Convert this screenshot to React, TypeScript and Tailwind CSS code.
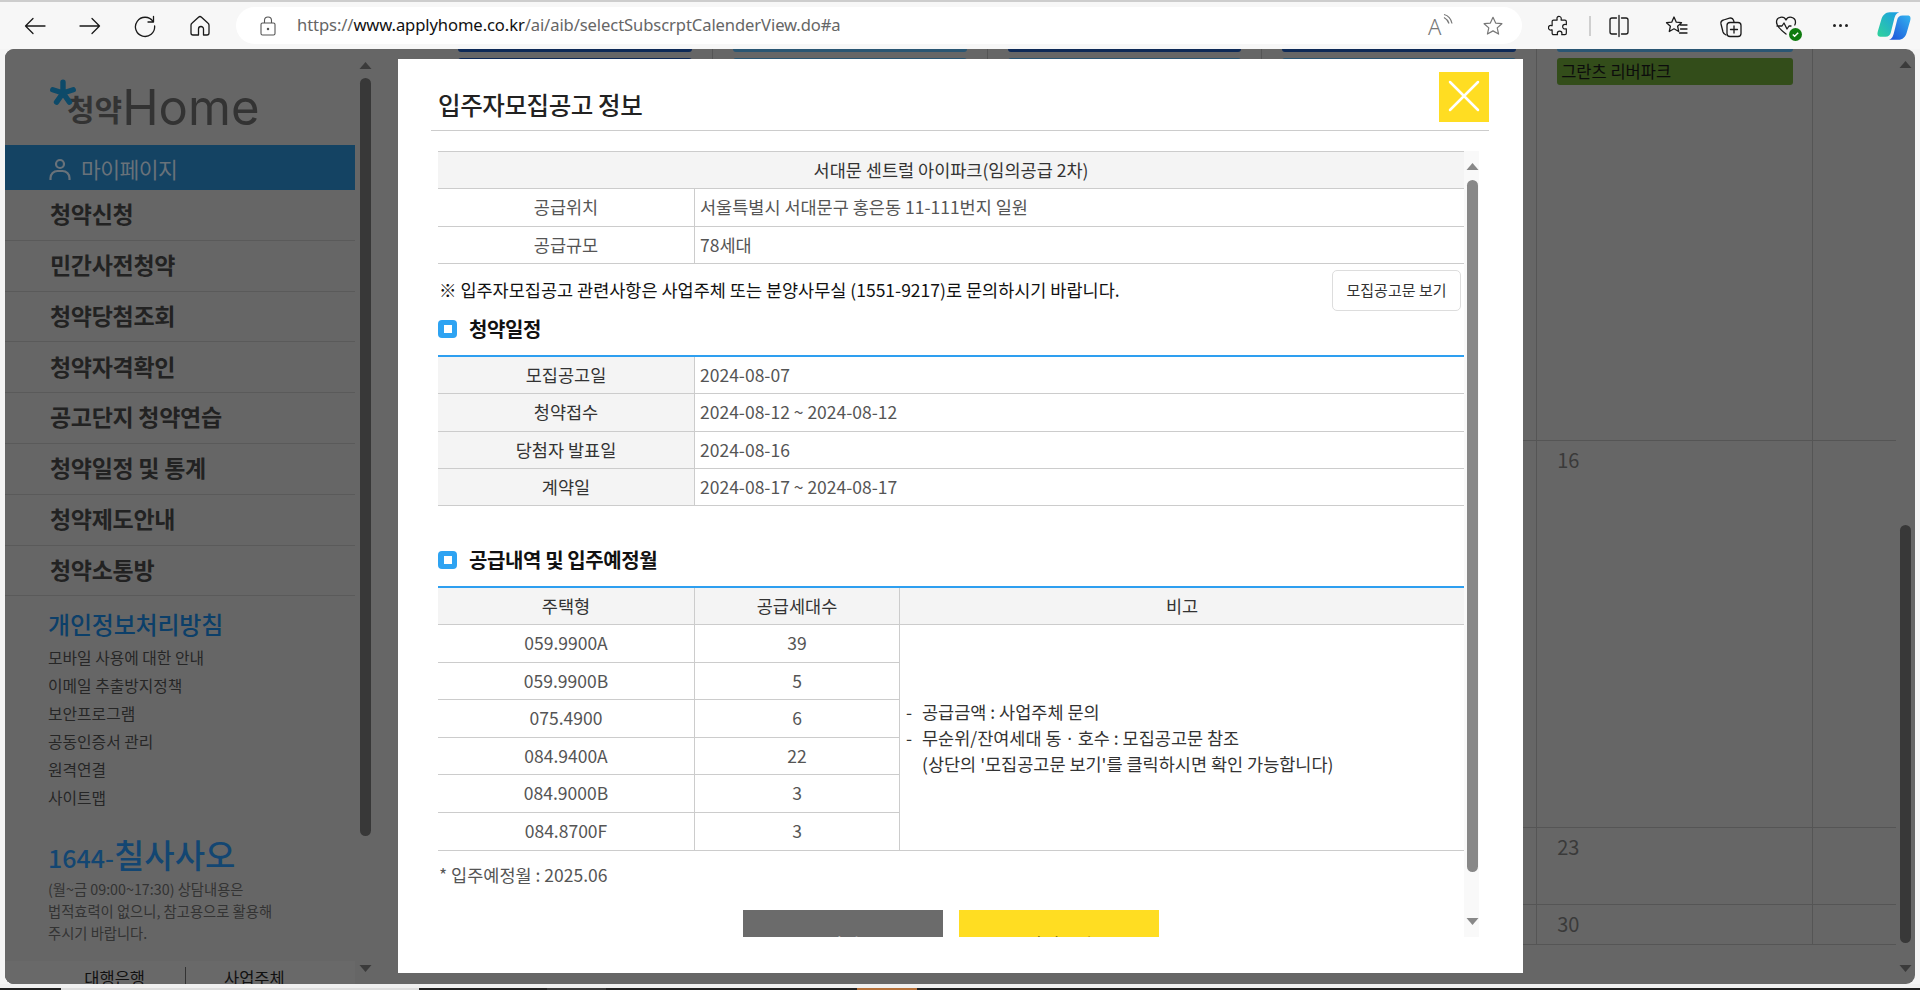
import React from 'react';

const sideMenu = ['청약신청', '민간사전청약', '청약당첨조회', '청약자격확인', '공고단지 청약연습', '청약일정 및 통계', '청약제도안내', '청약소통방'];
const sideLinks = ['모바일 사용에 대한 안내', '이메일 추출방지정책', '보안프로그램', '공동인증서 관리', '원격연결', '사이트맵'];
const schedule = [
  ['모집공고일', '2024-08-07'],
  ['청약접수', '2024-08-12 ~ 2024-08-12'],
  ['당첨자 발표일', '2024-08-16'],
  ['계약일', '2024-08-17 ~ 2024-08-17'],
];
const supply = [
  ['059.9900A', '39'],
  ['059.9900B', '5'],
  ['075.4900', '6'],
  ['084.9400A', '22'],
  ['084.9000B', '3'],
  ['084.8700F', '3'],
];

const Icon = ({ children, className }: { children: React.ReactNode; className: string }) => (
  <svg viewBox="0 0 24 24" fill="none" stroke="currentColor" strokeWidth="1.3" strokeLinecap="round" strokeLinejoin="round" className={className}>
    {children}
  </svg>
);

const ToolBtn = ({ children }: { children: React.ReactNode }) => (
  <div className="flex h-[37px] w-[55px] shrink-0 items-center justify-center text-[#1a1a1a]">{children}</div>
);

const Toolbar = () => (
  <div className="flex h-[47px] shrink-0 items-center bg-[#f7f7f7] pl-[7px]">
    <ToolBtn>
      <Icon className="h-6 w-6"><path d="M22 12H2.5M10 4.5 2.5 12l7.5 7.5" /></Icon>
    </ToolBtn>
    <ToolBtn>
      <Icon className="h-6 w-6"><path d="M2 12h19.5M14 4.5l7.5 7.5-7.5 7.5" /></Icon>
    </ToolBtn>
    <ToolBtn>
      <Icon className="h-6 w-6"><path d="M20 7.5A9.6 9.6 0 1 0 21.6 12M20.5 2.5v5.5H15" /></Icon>
    </ToolBtn>
    <ToolBtn>
      <Icon className="h-6 w-6"><path d="M10.5 3.2a2.2 2.2 0 0 1 3 0l6.6 6.1c.6.5.9 1.2.9 2V19a2 2 0 0 1-2 2h-3.5v-6a2.5 2.5 0 0 0-5 0v6H5a2 2 0 0 1-2-2v-7.7c0-.8.3-1.5.9-2z" /></Icon>
    </ToolBtn>
    <div className="ml-[9px] flex h-[37px] w-[1286px] shrink-0 items-center rounded-full bg-white pl-[24px] pr-[14px]">
      <svg viewBox="0 0 16 20" fill="none" stroke="#555" strokeWidth="1.1" className="h-[20px] w-[16px] shrink-0">
        <rect x="1" y="7" width="14" height="12" rx="1.5" />
        <path d="M4.5 7V4.5a3.5 3.5 0 0 1 7 0V7" />
        <circle cx="8" cy="13" r="0.7" fill="#555" />
      </svg>
      <div className="ml-[21px] flex-1 font-['Noto_Sans',sans-serif] text-[16.6px] tracking-[-0.1px] text-[#666]">
        https://<span className="text-[#111]">www.applyhome.co.kr</span>/ai/aib/selectSubscrptCalenderView.do#a
      </div>
      <div className="relative mr-[30px] h-[24px] w-[24px] text-[#777]">
        <span className="font-['Noto_Sans',sans-serif] text-[22px] font-light leading-[24px]">A</span>
        <svg viewBox="0 0 10 12" fill="none" stroke="#777" strokeWidth="1.2" className="absolute -right-[1px] top-[-1px] h-[13px] w-[10px]">
          <path d="M1 1c4 1 7 4 8 9M1 4c2 1 4 3 5 6" />
        </svg>
      </div>
      <Icon className="mr-[4px] h-[22px] w-[22px] text-[#777]"><path d="m12 2.5 2.9 6.3 6.8.7-5.1 4.6 1.5 6.7-6.1-3.5-6.1 3.5 1.5-6.7-5.1-4.6 6.8-.7z" /></Icon>
    </div>
    <div className="ml-[9px] flex h-[37px] w-[55px] shrink-0 items-center justify-center text-[#1a1a1a]">
      <Icon className="h-[22px] w-[22px]"><path d="M10 2.5a2.5 2.5 0 0 1 4.5 1.5c0 .5-.2 1-.2 1.5h4.2c.8 0 1.5.7 1.5 1.5v3.5c-.5 0-1-.2-1.5-.2a2.5 2.5 0 0 0 0 5c.5 0 1-.2 1.5-.2V20c0 .8-.7 1.5-1.5 1.5h-3.5c0-.5.2-1 .2-1.5a2.5 2.5 0 0 0-5 0c0 .5.2 1 .2 1.5H6c-.8 0-1.5-.7-1.5-1.5v-3.800c-.5 0-1 .2-1.5.2a2.5 2.5 0 0 1 0-5c.5 0 1 .2 1.5.2V7c0-.8.7-1.5 1.5-1.5h4c0-.5-.2-1-.2-1.5 0-.5.1-1 .2-1.5z" /></Icon>
    </div>
    <div className="ml-[3px] h-[20px] w-[2px] shrink-0 bg-[#cfcfcf]" />
    <ToolBtn>
      <Icon className="h-[24px] w-[24px]"><path d="M12 1.5v21M9.5 4H5a2 2 0 0 0-2 2v12a2 2 0 0 0 2 2h4.5M14.5 4H19a2 2 0 0 1 2 2v12a2 2 0 0 1-2 2h-4.5" /></Icon>
    </ToolBtn>
    <div className="ml-[2px]">
      <ToolBtn>
        <Icon className="h-[24px] w-[24px]"><path d="m10 3 2.3 5.2 5.2.5-3.900 3.500 1.100 5.300-4.700-2.700-4.700 2.700 1.100-5.300L2.500 8.700l5.200-.5zM16.500 11H23M16.500 15H23M15.500 19H23" /></Icon>
      </ToolBtn>
    </div>
    <ToolBtn>
      <Icon className="h-[24px] w-[24px]"><path d="M7 21c-1.500-.5-2.500-1.500-3-3L2 10c-.4-2 .5-3.500 2.500-4l6-1.800c2-.5 3.500.5 4 2L15 8" /><rect x="8" y="8.500" width="14" height="14" rx="3" /><path d="M15 12v7M11.500 15.500h7" /></Icon>
    </ToolBtn>
    <div className="relative">
      <ToolBtn>
        <Icon className="h-[24px] w-[24px]"><path d="M12 20C6 15.500 2.500 12 2.500 8a5 5 0 0 1 9.500-2 5 5 0 0 1 9.500 2c0 1-.2 2-.7 3M3 12h5l2-3 3 6 2-3h2" /></Icon>
      </ToolBtn>
      <div className="absolute bottom-[3px] right-[11px] flex h-[13px] w-[13px] items-center justify-center rounded-full bg-[#0f7b0f]">
        <svg viewBox="0 0 10 10" fill="none" stroke="white" strokeWidth="1.6" className="h-[9px] w-[9px]"><path d="m2 5 2 2 4-4" /></svg>
      </div>
    </div>
    <div className="flex h-[37px] w-[55px] shrink-0 items-center justify-center gap-[3px]">
      <span className="h-[3px] w-[3px] rounded-full bg-[#222]" />
      <span className="h-[3px] w-[3px] rounded-full bg-[#222]" />
      <span className="h-[3px] w-[3px] rounded-full bg-[#222]" />
    </div>
    <svg viewBox="0 0 32 28" className="ml-[9px] h-[30px] w-[34px] shrink-0">
      <defs>
        <linearGradient id="cp1" x1="0" y1="1" x2="1" y2="0">
          <stop offset="0" stopColor="#2fd39a" />
          <stop offset="1" stopColor="#1a9be8" />
        </linearGradient>
        <linearGradient id="cp2" x1="0" y1="1" x2="1" y2="0">
          <stop offset="0" stopColor="#1c4fd8" />
          <stop offset="1" stopColor="#33b4f0" />
        </linearGradient>
      </defs>
      <path d="M12 1h9c-3 1-4 3-5 7l-3 12c-.6 2.500-2 4-5 4H3C.5 24 0 22 .8 19L4 8c1-4 4-7 8-7z" fill="url(#cp1)" />
      <path d="M20 27h-9c3-1 4-3 5-7l3-12c.6-2.500 2-4 5-4h5c2.500 0 3 2 2.200 5L28 20c-1 4-4 7-8 7z" fill="url(#cp2)" />
    </svg>
  </div>
);

const Arrow = ({ down, className }: { down?: boolean; className: string }) => (
  <svg viewBox="0 0 12 7" className={className} fill="currentColor">
    <path d={down ? 'M0 0h12L6 7z' : 'M6 0l6 7H0z'} />
  </svg>
);

const Sidebar = () => (
  <div className="flex h-full w-[350px] shrink-0 flex-col overflow-hidden bg-[#666] text-[#222]">
    <div className="relative flex h-[96px] shrink-0 items-end pb-[17px] pl-[62px]">
      <svg viewBox="0 0 26 26" className="absolute left-[44px] top-[30px] h-[28px] w-[28px]">
        <g stroke="#0d4a69" strokeWidth="5" strokeLinecap="round">
          <path d="M13 13V3M13 13 3.500 10M13 13 7 21.500M13 13l6 8.500M13 13l9.500-3" />
        </g>
      </svg>
      <span className="font-['Noto_Sans_CJK_KR',sans-serif] text-[30px] font-bold leading-[40px] text-[#333]">청약</span>
      <span className="font-['Inter',sans-serif] text-[49px] font-normal leading-[40px] text-[#333]">Home</span>
    </div>
    <div className="flex h-[45px] shrink-0 items-center bg-[#144363] pl-[44px] pt-[3px] text-[#69727a]">
      <svg viewBox="0 0 22 24" fill="none" stroke="currentColor" strokeWidth="2.2" className="h-[24px] w-[22px]">
        <circle cx="11" cy="7" r="4" />
        <path d="M1.500 23v-2a7 7 0 0 1 7-7h5a7 7 0 0 1 7 7v2" />
      </svg>
      <span className="ml-[10px] text-[21.5px] tracking-[-0.5px]">마이페이지</span>
    </div>
    {sideMenu.map((m) => (
      <div key={m} className="flex h-[50.8px] shrink-0 items-center border-b border-[#5a5a5a] pb-[3px] pl-[45px] text-[23px] font-bold tracking-[-0.3px] text-[#222]">
        {m}
      </div>
    ))}
    <div className="mt-[11px] h-[33px] shrink-0 pl-[43px] text-[24px] font-medium leading-[33px] tracking-[-0.2px] text-[#0c3f69]">개인정보처리방침</div>
    <div className="mt-[3px] flex shrink-0 flex-col pl-[43px] text-[15.8px] text-[#262626]">
      {sideLinks.map((l) => (
        <div key={l} className="flex h-[28px] items-center">{l}</div>
      ))}
    </div>
    <div className="mt-[19px] flex h-[48px] shrink-0 items-baseline pl-[43px] font-medium text-[#134672]">
      <span className="text-[25px] leading-[48px]">1644-</span>
      <span className="text-[33px] leading-[48px]">칠사사오</span>
    </div>
    <div className="shrink-0 pl-[43px] text-[14.3px] leading-[21.8px] text-[#333]">
      (월~금 09:00~17:30) 상담내용은
      <br />
      법적효력이 없으니, 참고용으로 활용해
      <br />
      주시기 바랍니다.
    </div>
    <div className="mt-[17px] flex h-[40px] shrink-0 items-start bg-[#696969] pt-[6px] text-[16.5px] leading-[22px] text-[#111]">
      <div className="flex w-[180px] justify-end"><span className="mr-[40px]">대행은행</span></div>
      <div className="h-[18px] w-px bg-[#333]" />
      <span className="ml-[38px]">사업주체</span>
    </div>
  </div>
);

const Scroll = ({ width, top, bottom, gap, h }: { width: string; top: string; bottom: string; gap: string; h: string }) => (
  <div className={`flex h-full shrink-0 flex-col items-center ${width}`}>
    <Arrow className={`h-[7px] w-[13px] shrink-0 text-[#3b3b3b] ${top}`} />
    <div className={`w-[11px] shrink-0 rounded-full bg-[#383838] ${gap} ${h}`} />
    <Arrow down className={`h-[7px] w-[13px] shrink-0 text-[#3b3b3b] ${bottom}`} />
  </div>
);

const cols = [
  { top: 'bg-[#0e2a57]', next: 'bg-[#0e2a57]' },
  { top: 'bg-[#2a5673]', next: 'bg-[#2a5673]' },
  { top: 'bg-[#0e2a57]', next: 'bg-[#2a5673]' },
  { top: 'bg-[#0e2a57]', next: 'bg-[#2a5673]' },
];

const Calendar = () => (
  <div className="ml-[63px] flex h-full flex-1 flex-col">
    <div className="flex h-[392px] shrink-0 border-b border-[#555]">
      {cols.map((c, i) => (
        <div key={i} className="flex w-[274.8px] shrink-0 flex-col border-r border-[#555] px-[20px]">
          <div className={`h-[3px] rounded-b-[3px] ${c.top}`} />
          <div className={`mt-[6px] h-[27px] rounded-[3px] ${c.next}`} />
        </div>
      ))}
      <div className="flex w-[276px] shrink-0 flex-col border-r border-[#555] pl-[20px] pr-[19px]">
        <div className="h-[3px] rounded-b-[3px] bg-[#2a5673]" />
        <div className="mt-[6px] flex h-[27px] items-center rounded-[3px] bg-[#334d1a] pl-[4px] text-[16.5px] text-[#0c0c0c]">그란츠 리버파크</div>
      </div>
    </div>
    {[
      { n: '16', h: 'h-[387px]' },
      { n: '23', h: 'h-[77px]' },
      { n: '30', h: 'h-[40px]' },
    ].map((r) => (
      <div key={r.n} className={`flex shrink-0 border-b border-[#555] ${r.h}`}>
        <div className="w-[1099.2px] shrink-0 border-r border-[#555]" />
        <div className="w-[276px] shrink-0 border-r border-[#555] pl-[20px] pt-[5px] text-[20px] leading-[28px] text-[#3a3a3a]">{r.n}</div>
      </div>
    ))}
  </div>
);

const SectionTitle = ({ children, className }: { children: React.ReactNode; className: string }) => (
  <div className={`flex h-[18px] items-center ${className}`}>
    <div className="flex h-[18px] w-[19px] shrink-0 items-center justify-center rounded-[4px] bg-[#2ea3f2]">
      <div className="h-[8px] w-[8px] bg-white" />
    </div>
    <span className="ml-[12px] text-[20px] font-bold tracking-[-0.4px] text-[#111]">{children}</span>
  </div>
);

const Modal = () => (
  <div className="absolute left-[393px] top-[10px] flex h-[914px] w-[1125px] flex-col bg-white pl-[33px] pr-[34px] text-[17.5px] text-[#555]">
    <div className="flex h-[72px] shrink-0 items-start justify-between border-b border-[#ccc]">
      <h2 className="ml-[7px] mt-[28px] text-[24.5px] font-medium leading-[36px] tracking-[-0.4px] text-[#222]">입주자모집공고 정보</h2>
      <button className="mt-[13px] h-[50px] w-[50px] bg-[#ffdd22]">
        <svg viewBox="0 0 50 50" stroke="white" strokeWidth="2.5" strokeLinecap="round" className="h-[50px] w-[50px]">
          <path d="m11 10 28 28M39 10 11 38" />
        </svg>
      </button>
    </div>
    <div className="ml-[7px] mt-[20px] flex h-[786px] w-[1042px] shrink-0 overflow-hidden">
      <div className="w-[1026px] shrink-0">
        <div className="border-y border-[#ccc] bg-[#f4f4f4] text-center leading-[36px] text-[#333]">서대문 센트럴 아이파크(임의공급 2차)</div>
        {[
          ['공급위치', '서울특별시 서대문구 홍은동 11-111번지 일원'],
          ['공급규모', '78세대'],
        ].map(([a, b]) => (
          <div key={a} className="flex h-[37.5px] items-center border-b border-[#ccc]">
            <div className="flex h-full w-[257px] shrink-0 items-center justify-center border-r border-[#ccc]">{a}</div>
            <div className="pl-[5px]">{b}</div>
          </div>
        ))}
        <div className="flex items-center justify-between pr-[3px] pt-[6px]">
          <span className="pl-px text-[#111]">※ 입주자모집공고 관련사항은 사업주체 또는 분양사무실 (1551-9217)로 문의하시기 바랍니다.</span>
          <button className="h-[41px] w-[129px] rounded-[5px] border border-[#ddd] bg-white text-[15px] text-[#333]">모집공고문 보기</button>
        </div>
        <SectionTitle className="mb-[17px] mt-[9px]">청약일정</SectionTitle>
        <div className="border-t-2 border-[#2e9ff0]">
          {schedule.map(([a, b]) => (
            <div key={a} className="flex h-[37.3px] items-center border-b border-[#ccc]">
              <div className="flex h-full w-[257px] shrink-0 items-center justify-center border-r border-[#ccc] bg-[#f4f4f4] text-[#333]">{a}</div>
              <div className="pl-[5px]">{b}</div>
            </div>
          ))}
        </div>
        <SectionTitle className="mb-[17px] mt-[45px]">공급내역 및 입주예정월</SectionTitle>
        <div className="border-t-2 border-[#2e9ff0]">
          <div className="flex h-[37px] items-center border-b border-[#ccc] bg-[#f4f4f4] text-center text-[#333]">
            <div className="flex h-full w-[257px] shrink-0 items-center justify-center border-r border-[#ccc]">주택형</div>
            <div className="flex h-full w-[205px] shrink-0 items-center justify-center border-r border-[#ccc]">공급세대수</div>
            <div className="flex-1">비고</div>
          </div>
          <div className="flex border-b border-[#ccc]">
            <div className="w-[462px] shrink-0 border-r border-[#ccc]">
              {supply.map(([a, b], i) => (
                <div key={a} className={`flex h-[37.5px] items-center ${i < 5 ? 'border-b border-[#ccc]' : ''}`}>
                  <div className="flex h-full w-[257px] shrink-0 items-center justify-center border-r border-[#ccc]">{a}</div>
                  <div className="flex-1 text-center">{b}</div>
                </div>
              ))}
            </div>
            <div className="flex flex-1 flex-col justify-center pl-[6px] leading-[26px] text-[#333]">
              <div className="flex"><span className="w-[16px] shrink-0">-</span><span>공급금액 : 사업주체 문의</span></div>
              <div className="flex"><span className="w-[16px] shrink-0">-</span><span>무순위/잔여세대 동ㆍ호수 : 모집공고문 참조</span></div>
              <div className="pl-[16px]">(상단의 '모집공고문 보기'를 클릭하시면 확인 가능합니다)</div>
            </div>
          </div>
        </div>
        <div className="mt-[12px] h-[24px] pl-px leading-[24px]">* 입주예정월 : 2025.06</div>
        <div className="mt-[23px] flex justify-center gap-[16px]">
          <div className="flex h-[68px] w-[200px] items-center justify-center bg-[#6b6b6b] text-[18px] text-white">닫기</div>
          <div className="flex h-[68px] w-[200px] items-center justify-center bg-[#ffdd22] text-[18px] text-black">상세보기</div>
        </div>
      </div>
      <div className="flex h-full w-[15px] shrink-0 flex-col items-center bg-[#f9f9f9] pl-[2px]">
        <Arrow className="mt-[12px] h-[7px] w-[13px] shrink-0 text-[#888]" />
        <div className="mt-[10px] h-[692px] w-[11px] shrink-0 rounded-full bg-[#888]" />
        <Arrow down className="mt-[46px] h-[7px] w-[13px] shrink-0 text-[#888]" />
      </div>
    </div>
  </div>
);

export default function App() {
  return (
    <div className="flex h-[990px] w-[1920px] flex-col overflow-hidden bg-[#f4f4f4] font-['Noto_Sans_CJK_KR','Noto_Sans',sans-serif]">
      <div className="h-[2px] shrink-0 bg-[#cdcdcd]" />
      <Toolbar />
      <div className="relative mx-[5px] flex h-[935px] shrink-0 overflow-hidden rounded-[9px] bg-[#666]">
        <Sidebar />
        <Scroll width="w-[20px]" top="mt-[13px]" gap="mt-[9px]" h="h-[758px]" bottom="mt-[129px]" />
        <Calendar />
        <Scroll width="w-[19px]" top="mt-[12px]" gap="mt-[457px]" h="h-[418px]" bottom="mt-[22px]" />
        <Modal />
      </div>
      <div className="h-[4px] shrink-0 bg-[#f0f0f0]" />
      <div className="flex h-[2px] shrink-0 bg-[#202020]">
        <div className="ml-[61px] w-[358px] bg-[#dddddd]" />
        <div className="ml-[128px] w-[59px] bg-[#3a3a3a]" />
        <div className="ml-[251px] w-[60px] bg-[#b5713a]" />
      </div>
    </div>
  );
}
